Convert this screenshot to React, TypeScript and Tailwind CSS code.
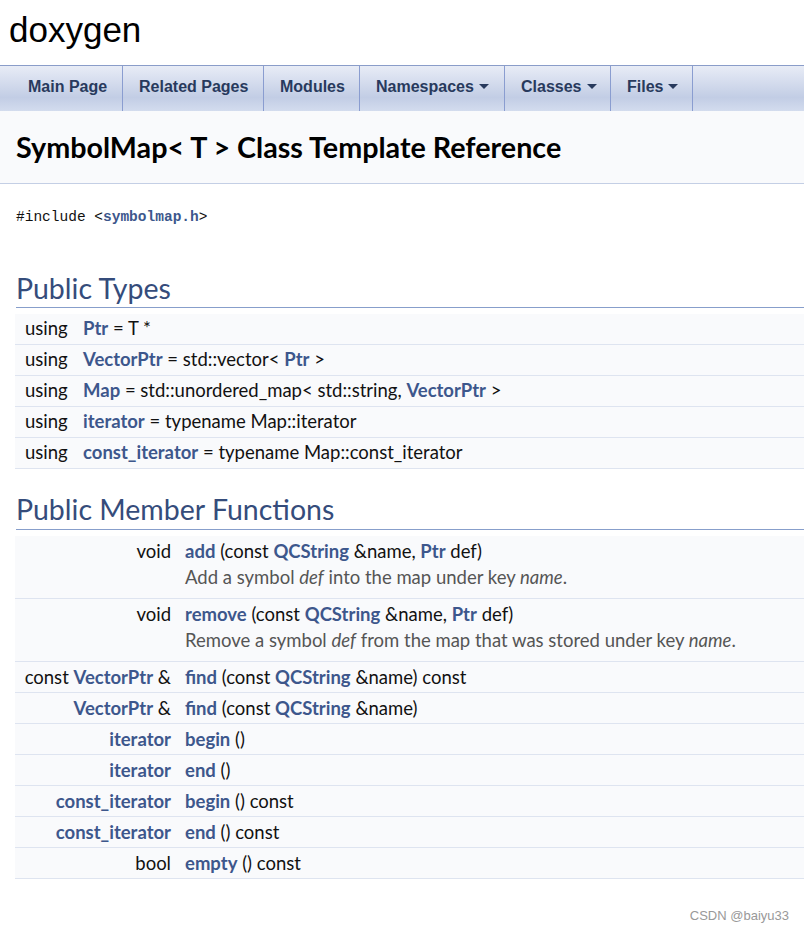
const body = "font-['Lato','Noto_Sans',sans-serif]";

function L({ children }: { children: React.ReactNode }) {
  return <span className="font-bold text-[#3d578c]">{children}</span>;
}

function Caret() {
  return (
    <svg width="10" height="6" viewBox="0 0 10 6" className="ml-[5px] inline-block">
      <path d="M0 0h10L5 5z" fill="#283a5d" />
    </svg>
  );
}

const tabs: { label: string; menu?: boolean; w: string }[] = [
  { label: "Main Page", w: "w-[123px] pl-[28px]" },
  { label: "Related Pages", w: "w-[141px] pl-[16px]" },
  { label: "Modules", w: "w-[96px] pl-[16px]" },
  { label: "Namespaces", menu: true, w: "w-[145px] pl-[16px]" },
  { label: "Classes", menu: true, w: "w-[106px] pl-[16px]" },
  { label: "Files", menu: true, w: "w-[82px] pl-[16px]" },
];

function TypeRow({ children }: { children: React.ReactNode }) {
  return (
    <div className="flex h-[31px] items-center border-b border-[#dee4f0] bg-[#f9fafc]">
      <span className="w-[68px] pl-[10px]">using</span>
      <span>{children}</span>
    </div>
  );
}

function FnRow({
  ret,
  children,
  desc,
}: {
  ret: React.ReactNode;
  children: React.ReactNode;
  desc?: React.ReactNode;
}) {
  return (
    <div className="flex border-b border-[#dee4f0] bg-[#f9fafc] leading-[22px]">
      <div className="w-[156px] shrink-0 pt-[4px] text-right">{ret}</div>
      <div className={`pl-[14px] pt-[4px] ${desc ? "pb-[10px]" : "pb-[4px]"}`}>
        <div className="h-[22px] whitespace-nowrap">{children}</div>
        {desc && <div className="mt-[4px] h-[22px] whitespace-nowrap text-[#555]">{desc}</div>}
      </div>
    </div>
  );
}

export default function App() {
  return (
    <div className="relative min-h-[933px] overflow-hidden bg-white">
      <div className="h-[65px] pl-[9px] pt-[7px] font-['Liberation_Sans',Arial,sans-serif] text-[35px] leading-[46px] text-black">
        doxygen
      </div>
      <div className="flex h-[46px] border-t border-[#8a9dc9] bg-[linear-gradient(#e8ecf6,#c2cde5_70%,#d3dcee)] font-['Liberation_Sans',Arial,sans-serif] text-[16px] font-bold text-[#283a5d]">
        {tabs.map((t) => (
          <div key={t.label} className={`flex shrink-0 items-center border-r border-[#8a9dd0] pb-[3px] ${t.w}`}>
            {t.label}
            {t.menu && <Caret />}
          </div>
        ))}
      </div>
      <div className={`${body} text-[18.5px] text-[#111]`}>
        <div className="h-[73px] border-b border-[#c4cfe5] bg-[#f9fafc] pl-[16px] pt-[18px] text-[28.7px] font-bold leading-[36px] text-black">
          SymbolMap&lt; T &gt; Class Template Reference
        </div>
        <div className="pl-[16px] pt-[23px] font-['Liberation_Mono',monospace] text-[14.5px] leading-[20px]">
          #include &lt;<span className="font-bold text-[#3d578c]">symbolmap.h</span>&gt;
        </div>
        <div className="mt-[42px] ml-[16px] border-b border-[#879ecb] text-[28.5px] leading-[38px] text-[#354c7b]">
          Public Types
        </div>
        <div className="ml-[15px] mt-[6px]">
          <TypeRow>
            <L>Ptr</L> = T *
          </TypeRow>
          <TypeRow>
            <L>VectorPtr</L> = std::vector&lt; <L>Ptr</L> &gt;
          </TypeRow>
          <TypeRow>
            <L>Map</L> = std::unordered_map&lt; std::string, <L>VectorPtr</L> &gt;
          </TypeRow>
          <TypeRow>
            <L>iterator</L> = typename Map::iterator
          </TypeRow>
          <TypeRow>
            <L>const_iterator</L> = typename Map::const_iterator
          </TypeRow>
        </div>
        <div className="mt-[21px] ml-[16px] border-b border-[#879ecb] pb-[1px] text-[28.5px] leading-[38px] text-[#354c7b]">
          Public Member Functions
        </div>
        <div className="ml-[15px] mt-[6px]">
          <FnRow
            ret="void"
            desc={
              <>
                Add a symbol <i>def</i> into the map under key <i>name</i>.
              </>
            }
          >
            <L>add</L> (const <L>QCString</L> &amp;name, <L>Ptr</L> def)
          </FnRow>
          <FnRow
            ret="void"
            desc={
              <>
                Remove a symbol <i>def</i> from the map that was stored under key <i>name</i>.
              </>
            }
          >
            <L>remove</L> (const <L>QCString</L> &amp;name, <L>Ptr</L> def)
          </FnRow>
          <FnRow
            ret={
              <>
                const <L>VectorPtr</L> &amp;
              </>
            }
          >
            <L>find</L> (const <L>QCString</L> &amp;name) const
          </FnRow>
          <FnRow
            ret={
              <>
                <L>VectorPtr</L> &amp;
              </>
            }
          >
            <L>find</L> (const <L>QCString</L> &amp;name)
          </FnRow>
          <FnRow ret={<L>iterator</L>}>
            <L>begin</L> ()
          </FnRow>
          <FnRow ret={<L>iterator</L>}>
            <L>end</L> ()
          </FnRow>
          <FnRow ret={<L>const_iterator</L>}>
            <L>begin</L> () const
          </FnRow>
          <FnRow ret={<L>const_iterator</L>}>
            <L>end</L> () const
          </FnRow>
          <FnRow ret="bool">
            <L>empty</L> () const
          </FnRow>
        </div>
      </div>
      <div className="absolute bottom-[8px] right-[15px] font-['Liberation_Sans',sans-serif] text-[13px] text-[#999]">
        CSDN @baiyu33
      </div>
    </div>
  );
}
